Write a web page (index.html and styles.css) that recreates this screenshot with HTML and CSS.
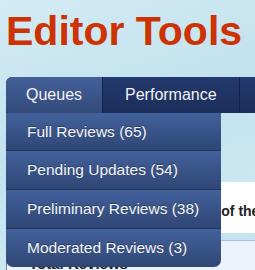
FILE: index.html
```html
<!DOCTYPE html>
<html lang="en">
<head>
    <meta charset="UTF-8">
    <title>Editor Tools</title>
    <link rel="stylesheet" href="styles.css">
</head>
<body>
    <div class="page">
        <h1 class="title">Editor Tools</h1>

        <nav class="tabs">
            <div class="tab tab-open">
                Queues
                <ul class="menu">
                    <li><a href="#">Full Reviews (65)</a></li>
                    <li><a href="#">Pending Updates (54)</a></li>
                    <li><a href="#">Preliminary Reviews (38)</a></li>
                    <li><a href="#">Moderated Reviews (3)</a></li>
                </ul>
            </div>
            <div class="tab tab-wide">Performance</div>
            <div class="tab tab-more">Policies</div>
        </nav>

        <div class="intro">
            <p>Here is a short summary of the queues.</p>
        </div>

        <div class="stats">
            <h3>Total Reviews</h3>
        </div>
    </div>
</body>
</html>
```

FILE: styles.css
```css
body {
    margin: 0;
    padding: 0;
    overflow: hidden;
    font-family: "Liberation Sans", Arial, sans-serif;
    background: linear-gradient(160deg, #d3ebf4 0%, #c3e2ee 40%, #cbe7f2 70%, #bfe0ed 100%);
}

.page {
    padding-left: 6px;
}

.title {
    margin: 0;
    padding: 11px 0 0 0;
    height: 77px;
    box-sizing: border-box;
    font-size: 41px;
    font-weight: bold;
    line-height: 41px;
    color: #cc3300;
    white-space: nowrap;
}

/* tab bar */
.tabs {
    display: flex;
    height: 36px;
    width: 300px;
    background: linear-gradient(#233a6e, #1b2d5a);
    border-radius: 6px 0 0 0;
}

.tab {
    position: relative;
    padding: 0 20px;
    line-height: 36px;
    font-size: 16px;
    color: #f2f2f2;
    border-right: 1px solid #14224a;
    white-space: nowrap;
}

.tab-wide {
    padding: 0 22px;
}

.tab-open {
    background: linear-gradient(#44609a, #344a7a);
    border-radius: 6px 0 0 0;
}

.tab-more {
    color: transparent;
}

/* dropdown under Queues */
.menu {
    position: absolute;
    z-index: 5;
    left: 0;
    top: 36px;
    width: 215px;
    margin: 0;
    padding: 0;
    list-style: none;
    border-radius: 0 0 7px 7px;
    overflow: hidden;
}

.menu li {
    height: 38px;
    border-top: 1px solid #26365b;
    background: linear-gradient(#42619b, #304675);
}

.menu li:first-child {
    border-top: none;
    height: 37px;
}

.menu a {
    display: block;
    padding-left: 21px;
    line-height: 38px;
    font-size: 15.5px;
    color: #f4f4f4;
    text-decoration: none;
    text-shadow: 0 -1px 0 rgba(0, 0, 0, 0.3);
}

/* page content behind the menu */
.intro {
    margin-top: 69px;
    height: 51px;
    background: #fff;
}

.intro p {
    margin: 0;
    padding: 21px 0 0 48px;
    font-size: 14px;
    font-weight: bold;
    color: #222;
    white-space: nowrap;
}

.stats {
    margin-top: 7px;
    height: 60px;
    background: #e9f3f9;
    border-top: 1px solid #9fc4d6;
    border-left: 1px solid #6f7f8c;
}

.stats h3 {
    margin: 0;
    padding: 14px 0 0 22px;
    font-size: 15px;
    color: #222;
}
```
